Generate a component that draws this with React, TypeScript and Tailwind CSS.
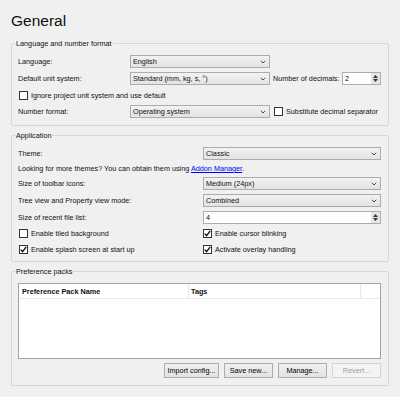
import React from "react";

const Chevron = () => (
  <svg width="6" height="4" viewBox="0 0 6 4" className="shrink-0">
    <path d="M0.8 0.8 L3 3 L5.2 0.8" fill="none" stroke="#4a4a4a" strokeWidth="1" />
  </svg>
);

const Combo = ({ text, className = "" }: { text: string; className?: string }) => (
  <div
    className={`h-[13px] border border-[#acacac] bg-linear-to-b from-[#f2f2f2] to-[#e3e3e3] flex items-center justify-between pl-[2px] pr-[3px] ${className}`}
  >
    <span className="leading-[9px] whitespace-nowrap">{text}</span>
    <Chevron />
  </div>
);

const Spin = ({ text, className = "" }: { text: string; className?: string }) => (
  <div className={`h-[13px] border border-[#abadb3] bg-white flex ${className}`}>
    <span className="flex-1 pl-[2px] leading-[11px]">{text}</span>
    <div className="w-[9px] h-full bg-[#e4e4e4] flex flex-col items-center justify-center gap-[1px]">
      <svg width="5" height="3" viewBox="0 0 5 3">
        <path d="M0 3 L2.5 0 L5 3 Z" fill="#333" />
      </svg>
      <svg width="5" height="3" viewBox="0 0 5 3">
        <path d="M0 0 L2.5 3 L5 0 Z" fill="#333" />
      </svg>
    </div>
  </div>
);

const Check = ({ checked, label }: { checked?: boolean; label: string }) => (
  <div className="flex items-center">
    <div className="w-[9px] h-[9px] border border-[#333] bg-white flex items-center justify-center shrink-0">
      {checked && (
        <svg width="7" height="7" viewBox="0 0 7 7">
          <path d="M0.8 3.6 L2.6 5.6 L6.2 0.9" fill="none" stroke="#111" strokeWidth="1.4" />
        </svg>
      )}
    </div>
    <span className="ml-[3px] leading-[9px] whitespace-nowrap">{label}</span>
  </div>
);

const Group = ({ title, className = "", children }: { title: string; className?: string; children: React.ReactNode }) => (
  <fieldset className={`border border-[#d6d6d6] rounded-[2px] w-[378px] ${className}`}>
    <legend className="ml-[3px] px-[1px] leading-[11px]">{title}</legend>
    {children}
  </fieldset>
);

const Button = ({ text, w, disabled }: { text: string; w: string; disabled?: boolean }) => (
  <div
    className={`h-[15px] ${w} border flex items-center justify-center leading-[9px] ${
      disabled
        ? "border-[#d5d5d5] bg-[#f3f3f3] text-[#a0a0a0]"
        : "border-[#adadad] bg-linear-to-b from-[#f0f0f0] to-[#e2e2e2] text-black"
    }`}
  >
    {text}
  </div>
);

export default function App() {
  return (
    <div
      className="w-[400px] h-[397px] bg-[#f0f0f0] text-[#111] overflow-hidden pl-[11px] text-[7.25px]"
      style={{ fontFamily: '"Liberation Sans", Arial, sans-serif' }}
    >
      <div className="h-[38px] pt-[13px]">
        <div className="text-[15.5px] leading-[16px]">General</div>
      </div>

      <Group title="Language and number format">
        <div className="pl-[6px] pr-[7px] pb-[7px]">
          <div className="mt-[6px] h-[13px] flex items-center">
            <span className="w-[112px] leading-[9px]">Language:</span>
            <Combo text="English" className="w-[140px]" />
          </div>
          <div className="mt-[4px] h-[13px] flex items-center">
            <span className="w-[112px] leading-[9px]">Default unit system:</span>
            <Combo text="Standard (mm, kg, s, °)" className="w-[140px]" />
            <span className="ml-[3px] leading-[9px] whitespace-nowrap">Number of decimals:</span>
            <Spin text="2" className="ml-auto w-[39px]" />
          </div>
          <div className="mt-[4px] h-[13px] flex items-center pl-[1px]">
            <Check label="Ignore project unit system and use default" />
          </div>
          <div className="mt-[3px] h-[13px] flex items-center">
            <span className="w-[112px] leading-[9px]">Number format:</span>
            <Combo text="Operating system" className="w-[140px]" />
            <div className="ml-[4px]">
              <Check label="Substitute decimal separator" />
            </div>
          </div>
        </div>
      </Group>

      <Group title="Application" className="mt-[4px]">
        <div className="pl-[6px] pr-[7px] pb-[5px]">
          <div className="mt-[6px] h-[13px] flex items-center">
            <span className="w-[185px] leading-[9px]">Theme:</span>
            <Combo text="Classic" className="flex-1" />
          </div>
          <div className="mt-[2px] h-[13px] flex items-center">
            <span className="leading-[9px] whitespace-nowrap">
              Looking for more themes? You can obtain them using{" "}
              <span className="text-[#0000ff] underline">Addon Manager</span>.
            </span>
          </div>
          <div className="mt-[2px] h-[13px] flex items-center">
            <span className="w-[185px] leading-[9px]">Size of toolbar icons:</span>
            <Combo text="Medium (24px)" className="flex-1" />
          </div>
          <div className="mt-[4px] h-[13px] flex items-center">
            <span className="w-[185px] leading-[9px]">Tree view and Property view mode:</span>
            <Combo text="Combined" className="flex-1" />
          </div>
          <div className="mt-[4px] h-[13px] flex items-center">
            <span className="w-[185px] leading-[9px]">Size of recent file list:</span>
            <Spin text="4" className="flex-1" />
          </div>
          <div className="mt-[3px] h-[13px] grid grid-cols-[185px_1fr] items-center">
            <div className="pl-[1px]">
              <Check label="Enable tiled background" />
            </div>
            <Check checked label="Enable cursor blinking" />
          </div>
          <div className="mt-[3px] h-[13px] grid grid-cols-[185px_1fr] items-center">
            <div className="pl-[1px]">
              <Check checked label="Enable splash screen at start up" />
            </div>
            <Check checked label="Activate overlay handling" />
          </div>
        </div>
      </Group>

      <Group title="Preference packs" className="mt-[4px]">
        <div className="pl-[6px] pr-[7px] pb-[7px]">
          <div className="mt-[6px] h-[76px] border border-[#a3a3a3] bg-white flex flex-col">
            <div className="h-[15px] flex border-b border-[#e3ebf4] font-bold">
              <div className="w-[170px] border-r border-[#e8e8e8] pl-[3px] flex items-center leading-[9px]">
                Preference Pack Name
              </div>
              <div className="w-[172px] border-r border-[#e8e8e8] pl-[2px] flex items-center leading-[9px]">
                Tags
              </div>
              <div className="flex-1" />
            </div>
          </div>
          <div className="mt-[4px] flex justify-end gap-[5px]">
            <Button text="Import config..." w="w-[55px]" />
            <Button text="Save new..." w="w-[49px]" />
            <Button text="Manage..." w="w-[49px]" />
            <Button text="Revert..." w="w-[49px]" disabled />
          </div>
        </div>
      </Group>
    </div>
  );
}
